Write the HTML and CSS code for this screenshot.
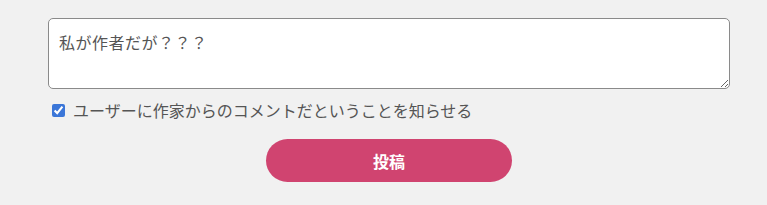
FILE: index.html
```html
<!DOCTYPE html>
<html lang="ja">
<head>
    <meta charset="UTF-8">
    <title>コメント投稿</title>
    <link rel="stylesheet" href="styles.css">
</head>
<body>
    <form class="comment-form">
        <textarea class="comment-text">私が作者だが？？？</textarea>
        <label class="author-check">
            <input type="checkbox" checked>
            <span>ユーザーに作家からのコメントだということを知らせる</span>
        </label>
        <div class="submit-row">
            <button type="button" class="submit-btn">投稿</button>
        </div>
    </form>
</body>
</html>
```
FILE: styles.css
```css
html, body {
    margin: 0;
    padding: 0;
    background-color: #f1f1f1;
}
body {
    font-family: "Noto Sans CJK JP", sans-serif;
    color: #555;
}
.comment-form {
    width: 682px;
    margin-left: 48px;
    padding-top: 18px;
}
.comment-text {
    display: block;
    width: 682px;
    height: 71px;
    box-sizing: border-box;
    border: 1px solid #8a8a8a;
    border-radius: 5px;
    background: #fff;
    padding: 12px 10px;
    font-family: inherit;
    font-size: 16px;
    letter-spacing: 0.5px;
    line-height: 1.4;
    color: #555;
}
.author-check {
    display: flex;
    align-items: center;
    gap: 8px;
    margin-top: 9px;
    margin-left: 4px;
    font-size: 16px;
}
.author-check input {
    margin: 0;
    width: 13px;
    height: 13px;
    accent-color: #3b76d8;
}
.submit-row {
    display: flex;
    justify-content: center;
    margin-top: 17px;
}
.submit-btn {
    width: 246px;
    height: 43px;
    border: none;
    border-radius: 22px;
    background-color: #d04470;
    color: #fff;
    font-family: inherit;
    font-size: 16px;
    font-weight: bold;
}
```
